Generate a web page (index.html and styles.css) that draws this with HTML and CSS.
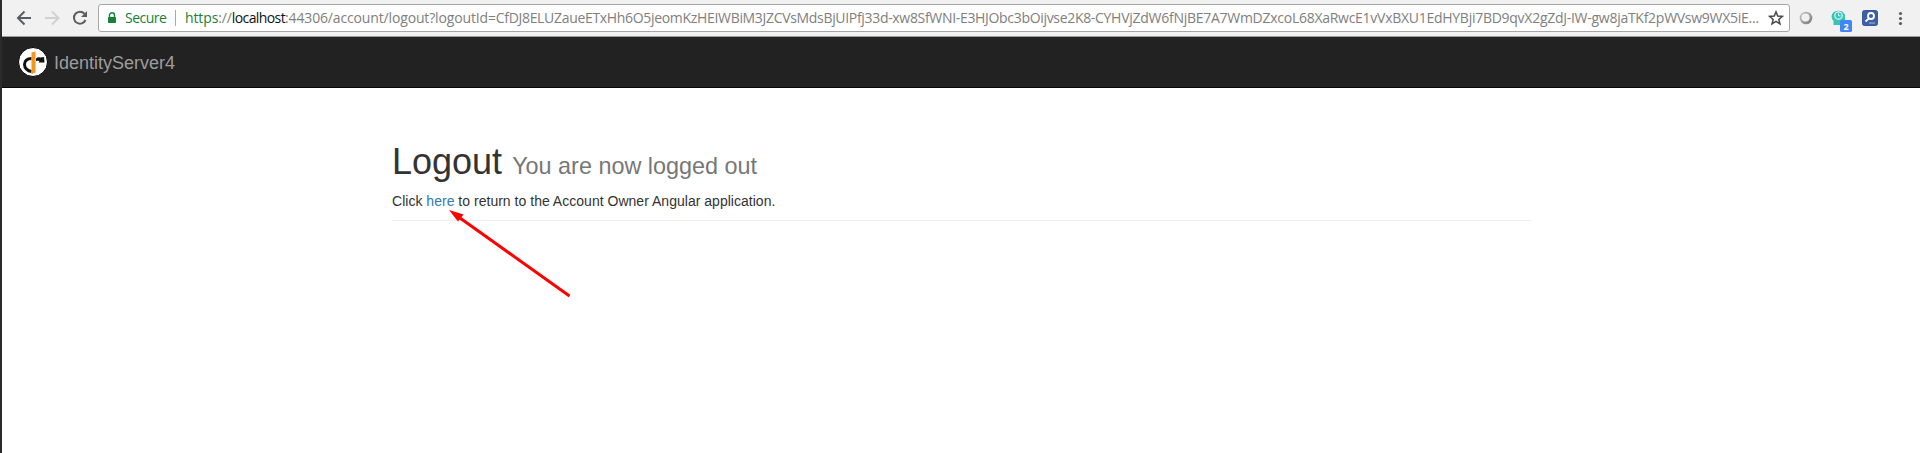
FILE: index.html
```html
<!DOCTYPE html>
<html lang="en">
<head>
<meta charset="utf-8">
<title>IdentityServer4</title>
<link rel="stylesheet" href="styles.css">
</head>
<body>
<div class="window">
  <header class="toolbar">
    <svg class="nav-icons" width="96" height="36" viewBox="0 0 96 36" fill="none">
      <path d="M31 18H19M24.500 11.500L18 18l6.500 6.500" stroke="#5a5d61" stroke-width="2"/>
      <path d="M45 18H57.500M52 11.500L58.500 18l-6.500 6.500" stroke="#d0d1d3" stroke-width="2"/>
      <path d="M84.500 13.700A6 6 0 1 0 85.500 20" stroke="#5a5d61" stroke-width="2"/>
      <path d="M87 11v6h-6z" fill="#5a5d61"/>
    </svg>
    <div class="address">
      <svg class="lock" width="10" height="12" viewBox="0 0 10 12"><path d="M1.500 5.500h7v5h-7z" fill="#188038" stroke="#188038" stroke-linejoin="round"/><path d="M2.500 5V3.200a2.500 2.500 0 0 1 5 0V5" fill="none" stroke="#188038" stroke-width="1.400"/></svg>
      <span class="secure">Secure</span>
      <span class="divider"></span>
      <span class="url"><span class="scheme">https</span><span class="slashes">://</span><span class="host">localhost</span><span class="path">:44306/account/logout?logoutId=</span><span class="token-a">CfDJ8ELUZaueETxHh6O5jeomKzHEIWBiM3JZCVsMdsBjUIPfj33d-xw8SfWNI-E3HJObc3bOijvse2K8-</span><span class="token-b">CYHVjZdW6fNjBE7A7WmDZxcoL68XaRwcE1vVxBXU1EdHYBji7BD9qvX2gZdJ-IW-gw8jaTKf2pWVsw9WX5iE...</span></span>
      <svg class="star" width="16" height="16" viewBox="0 0 16 16"><path d="M8 1.800l1.700 4.300 4.700.3-3.600 3 1.200 4.500L8 11.400l-4 2.500 1.200-4.500-3.600-3 4.700-.3z" fill="none" stroke="#47494d" stroke-width="1.500"/></svg>
    </div>
    <svg class="extensions" width="130" height="36" viewBox="1790 0 130 36">
      <defs>
        <linearGradient id="ring" x1="0" y1="0" x2="1" y2="1"><stop offset="0" stop-color="#c8c8c8"/><stop offset="1" stop-color="#777"/></linearGradient>
      </defs>
      <circle cx="1806" cy="18" r="6.300" fill="url(#ring)"/>
      <circle cx="1805.500" cy="17.500" r="4.100" fill="#f0f0f0"/>
      <path d="M1833.500 25v-4q-2-2-2-5a7 6.500 0 0 1 13.500-1v5q-1 2-3 2v3z" fill="#35c4b5"/>
      <circle cx="1838.500" cy="15.500" r="3.700" fill="none" stroke="#e4f7f4" stroke-width="1.200"/>
      <path d="M1838.500 13.500v2.300h2" fill="none" stroke="#e4f7f4"/>
      <rect x="1840" y="20" width="12" height="12" rx="1.500" fill="#4285f4"/>
      <text class="badge" x="1846" y="30" text-anchor="middle">2</text>
      <rect x="1862.500" y="10.500" width="15" height="15" rx="2" fill="#3d60a3" stroke="#34599c"/>
      <circle cx="1871" cy="16" r="3" fill="none" stroke="#fff" stroke-width="1.800"/>
      <path d="M1869 18.300l-3.500 3.200" stroke="#fff" stroke-width="1.800"/>
      <path d="M1869 23h6" stroke="#a9bce0"/>
      <g fill="#5a5d61"><circle cx="1900.500" cy="13.500" r="1.600"/><circle cx="1900.500" cy="18.500" r="1.600"/><circle cx="1900.500" cy="23.500" r="1.600"/></g>
    </svg>
  </header>
  <nav class="navbar">
    <svg class="logo" width="30" height="30" viewBox="0 0 30 30">
      <circle cx="15" cy="15" r="14.500" fill="#fff" stroke="#000"/>
      <path d="M13.500 11.500C9 11.500 6.500 14 6.500 17.500s3 6.500 7 7" fill="none" stroke="#111" stroke-width="3"/>
      <path d="M18 11.500q2-2 4.500-1l3.500-.5.5 5.500h-6l1-1.500q-2-.5-3.500 0z" fill="#111"/>
      <path d="M13.500 5.500l4-1v21l-4 1.500z" fill="#f7941d"/>
    </svg>
    <span class="brand">IdentityServer4</span>
  </nav>
  <main class="container">
    <h1>Logout <small>You are now logged out</small></h1>
    <div class="message">Click <a class="link" href="#">here</a> to return to the Account Owner Angular application.</div>
    <hr class="rule">
  </main>
  <svg class="arrow" width="130" height="95" viewBox="445 205 130 95"><path d="M460 218L569.500 296" stroke="#f00" stroke-width="3"/><path d="M449 210l14.500 4.500-5.500 7z" fill="#f00"/></svg>
</div>
</body>
</html>
```
FILE: styles.css
```css
* { box-sizing: border-box; }
body { margin: 0; background: #fff; color: #333; font: 14px/20px "Liberation Sans", Arial, sans-serif; }
.window { position: relative; height: 453px; border-left: 2px solid #2b2b2b; overflow: hidden; }
.toolbar { display: flex; align-items: center; height: 37px; background: #f1f1f1; border-bottom: 1px solid #999; font-family: "Open Sans", "Noto Sans", sans-serif; }
.nav-icons { flex: none; margin-left: -2px; width: 96px; }
.address { display: flex; align-items: center; flex: none; margin-left: 2px; width: 1692px; height: 28px; padding-left: 8px; background: #fff; border: 1px solid #a6a6a6; border-radius: 3px; white-space: nowrap; }
.lock { flex: none; }
.secure { flex: none; width: 50px; margin-left: 8px; color: #188038; letter-spacing: -0.5px; }
.divider { flex: none; width: 1px; height: 16px; background: #aaa; }
.url { display: block; flex: none; width: 1583px; margin-left: 9px; color: #808080; }
.scheme { color: #188038; letter-spacing: -0.12px; }
.slashes { letter-spacing: -0.12px; }
.host { color: #111; letter-spacing: -0.6px; }
.path { letter-spacing: -0.15px; }
.token-a { letter-spacing: -0.32px; }
.token-b { letter-spacing: -0.27px; }
.star { flex: none; }
.extensions { flex: none; }
.badge { fill: #fff; font: 700 9px "Open Sans", sans-serif; }
.navbar { display: flex; align-items: center; height: 51px; padding-left: 16px; background: #222; border-bottom: 1px solid #080808; }
.logo { flex: none; }
.brand { padding-top: 1px; margin-left: 6px; color: #9d9d9d; font-size: 18px; }
.container { width: 1140px; margin: 0 auto; margin-left: 390px; padding-top: 54px; }
h1 { margin: 0 0 5px; font-size: 36px; font-weight: 400; line-height: 40px; }
small { color: #777; font-size: 23.4px; }
.message { letter-spacing: 0.02px; }
.link { color: #337ab7; text-decoration: none; }
.rule { margin: 9px 0 0; border: 0; border-top: 1px solid #eee; }
.arrow { position: absolute; left: 443px; top: 205px; }
```
